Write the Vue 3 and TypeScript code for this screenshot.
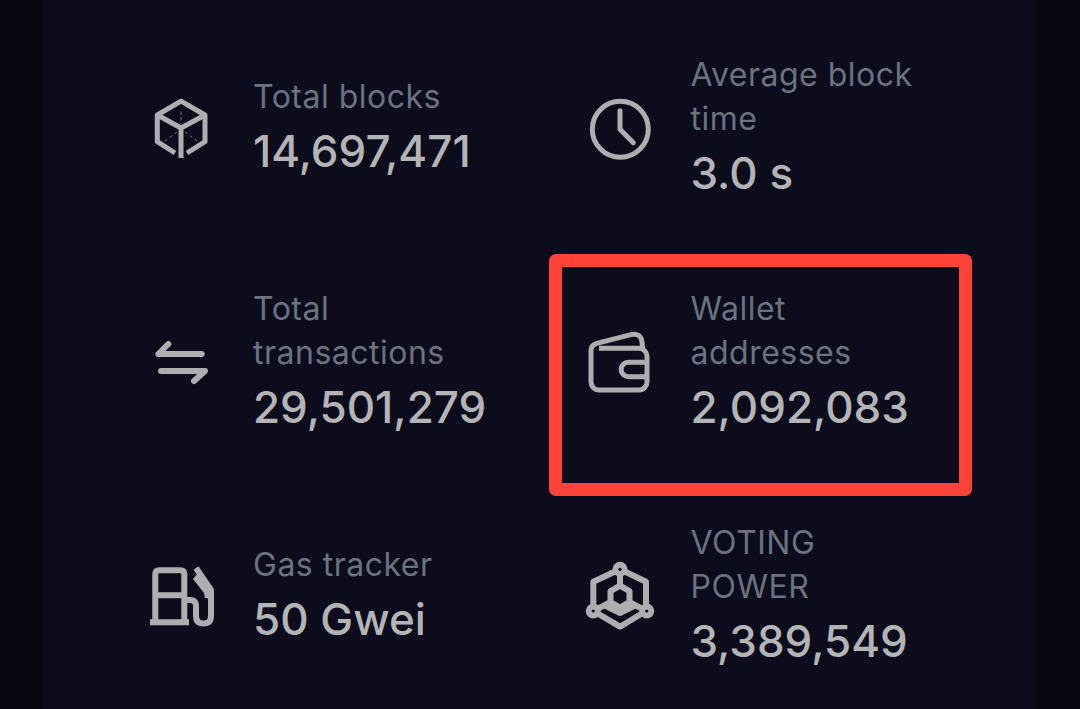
<script setup lang="ts">
interface Stat {
  icon: 'cube' | 'clock' | 'arrows' | 'wallet' | 'gas' | 'voting'
  label: string
  value: string
  marked?: boolean
}

const stats: Stat[] = [
  { icon: 'cube', label: 'Total blocks', value: '14,697,471' },
  { icon: 'clock', label: 'Average block time', value: '3.0 s' },
  { icon: 'arrows', label: 'Total transactions', value: '29,501,279' },
  { icon: 'wallet', label: 'Wallet addresses', value: '2,092,083', marked: true },
  { icon: 'gas', label: 'Gas tracker', value: '50 Gwei' },
  { icon: 'voting', label: 'VOTING POWER', value: '3,389,549' },
]
</script>

<template>
  <div class="page">
    <div class="panel">
      <div class="grid">
        <div v-for="stat in stats" :key="stat.label" class="stat">
          <svg class="icon" viewBox="0 0 64 64">
            <g v-if="stat.icon === 'cube'">
              <path d="M26 56 8.300 44.700V18L32 4.200 56 18v26.700L38 56" />
              <path d="M8.300 18 32 31l24-13M32 31v30" />
              <path class="thin" d="M32 14.500V27M28 35l-12 9M36 35l12 9" />
            </g>
            <g v-else-if="stat.icon === 'clock'">
              <circle cx="33.300" cy="32.300" r="28" />
              <path class="round" d="M33 13.700v18.600l13.300 13.400" />
            </g>
            <g v-else-if="stat.icon === 'arrows'" class="heavy round">
              <path d="M52.700 23H9.300l10-10" />
              <path d="M12 40h44L45 50" />
            </g>
            <g v-else-if="stat.icon === 'wallet'">
              <path d="M12 17.300h40a8 8 0 0 1 8 8V51a8 8 0 0 1-8 8H12a8 8 0 0 1-8-8V20" />
              <path d="M4 20q0-6 5.700-7.700L44 3.600q10-2 11 7.400l.7 6.300" />
              <path d="M60 31.300H41.300a7.200 7.200 0 0 0 0 14.400H60" />
            </g>
            <g v-else-if="stat.icon === 'gas'" class="heavy">
              <path d="M1 57.300h39M6.300 57V9.300q0-4 4-4h21q4 0 4 4V57M6.300 30.300h29" />
              <path d="M36 35h5q6 0 6 6v10q0 7.500 7.500 7.500T62 51V25L47 3" />
              <path class="fill" d="M44 14l5-6 14 16v10l-7-1-1-5z" />
            </g>
            <g v-else class="heavy">
              <path d="M33 4.300 59 16.700V46L33 61.700 6.300 46V16.700z" />
              <path d="M33 20.700l9.500 5.500v11L33 42.700l-9.500-5.500v-11z" />
              <path d="M33 4.300v16.400M6.300 46l17.200-8.800M59.700 46l-17.200-8.800M17 40l16 8 16-8" />
              <circle class="node" cx="33" cy="4.300" r="7.500" />
              <circle class="node" cx="6.300" cy="46" r="7.500" />
              <circle class="node" cx="59.700" cy="46" r="7.500" />
              <circle class="hole" cx="33" cy="4.300" r="1.600" />
              <circle class="hole" cx="6.300" cy="46" r="1.600" />
              <circle class="hole" cx="59.700" cy="46" r="1.600" />
            </g>
          </svg>
          <div class="text">
            <div class="label">{{ stat.label }}</div>
            <div class="value">{{ stat.value }}</div>
          </div>
          <div v-if="stat.marked" class="marker" />
        </div>
      </div>
    </div>
  </div>
</template>

<style>
html,
body {
  margin: 0;
  background: #070714;
}
</style>

<style scoped>
.page {
  width: 1080px;
  height: 709px;
  overflow: hidden;
  background: #070714;
  font-family: Inter, "Liberation Sans", sans-serif;
}

.panel {
  width: 993px;
  height: 709px;
  margin-left: 43px;
  background: #0c0c1c;
}

.grid {
  display: grid;
  grid-template-columns: 437.5px 437px;
  grid-auto-rows: 234px;
  padding: 12px 0 0 106px;
}

.stat {
  position: relative;
  display: flex;
  align-items: center;
  gap: 40px;
}

.icon {
  flex: none;
  width: 64px;
  height: 64px;
  overflow: visible;
  fill: none;
  stroke: #aeaeb0;
  stroke-width: 5;
  stroke-linejoin: round;
}

.icon .round {
  stroke-linecap: round;
}

.icon .thin {
  stroke-width: 1;
  stroke-dasharray: 3 3;
  opacity: 0.7;
}

.icon .heavy {
  stroke-width: 6;
}

.icon .fill,
.icon .node {
  fill: #aeaeb0;
  stroke: none;
}

.icon .hole {
  fill: #0c0c1c;
  stroke: none;
}

.text {
  width: 240px;
}

.label {
  font-size: 32px;
  line-height: 44px;
  letter-spacing: 0.5px;
  color: #6b7280;
}

.value {
  font-size: 44px;
  line-height: 64px;
  font-weight: 500;
  color: #b4b4b6;
}

.marker {
  position: absolute;
  left: -37.500px;
  top: 8px;
  box-sizing: border-box;
  width: 423px;
  height: 242px;
  border: 13px solid #ff4338;
  border-radius: 7px;
}
</style>
